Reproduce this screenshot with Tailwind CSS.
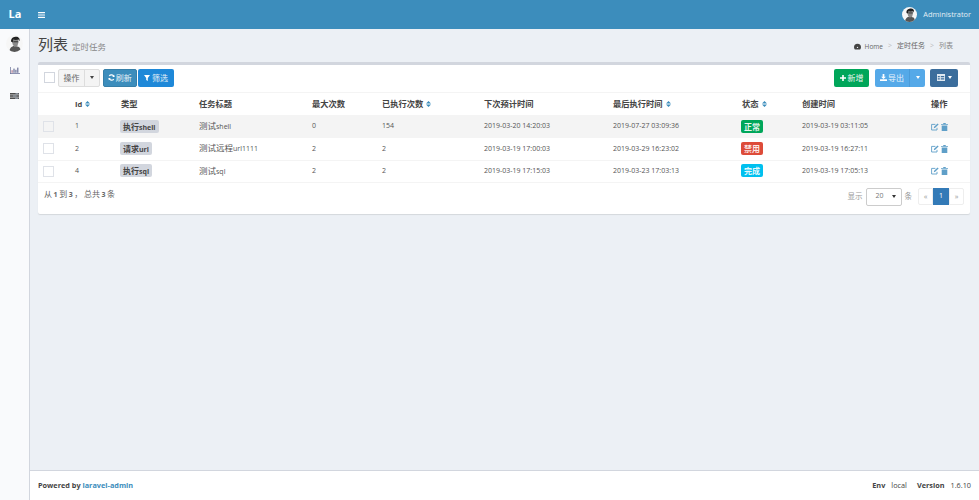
<!DOCTYPE html>
<html lang="zh">
<head>
    <meta charset="UTF-8">
    <title>列表</title>
    <script src="https://cdn.jsdelivr.net/npm/@tailwindcss/browser@4"></script>
</head>
<body class="h-[500px] w-[979px] overflow-hidden bg-[#ecf0f5] font-['Open_Sans','Noto_Sans_CJK_SC',sans-serif] text-[8.5px] text-[#333]">
    <!-- top bar -->
    <header class="flex h-[29px] items-center bg-[#3c8dbc] text-white">
        <div class="w-[30px] text-center text-[11px] font-bold">La</div>
        <svg class="ml-[8px] h-[6px] w-[7px]" viewBox="0 0 7 6" fill="#fff"><rect width="7" height="1.200" rx=".3"/><rect y="2.400" width="7" height="1.200" rx=".3"/><rect y="4.800" width="7" height="1.200" rx=".3"/></svg>
        <div class="ml-auto flex items-center gap-[6px] pr-[8px] text-[7.4px] text-[#e3eef5]">
            <svg class="h-[15px] w-[15px] rounded-full" viewBox="0 0 30 30"><rect width="30" height="30" fill="#f6f6f6"/><path d="M6 30c0-7 4-10 9-11l8 2c2 2 3 5 3 9z" fill="#555"/><path d="M11 13c0-5 3-7 7-7 3 0 5 3 4 7l-2 7-5 1-3-4z" fill="#8a8a8a"/><path d="M9 12C8 5 14 3 18 3c4 0 7 3 6 8l-2-3c-3 1-7 1-9 0l-1 5z" fill="#222"/><rect x="13" y="11" width="8" height="1.800" fill="#333"/></svg>
            <span>Administrator</span>
        </div>
    </header>

    <div class="flex h-[471px]">
        <!-- sidebar -->
        <aside class="flex w-[30px] shrink-0 flex-col items-center border-r border-[#d2d6de] bg-[#f9fafc] pt-[6px]">
            <svg class="h-[17px] w-[17px] rounded-full" viewBox="0 0 30 30"><rect width="30" height="30" fill="#f6f6f6"/><path d="M6 30c0-7 4-10 9-11l8 2c2 2 3 5 3 9z" fill="#555"/><path d="M11 13c0-5 3-7 7-7 3 0 5 3 4 7l-2 7-5 1-3-4z" fill="#8a8a8a"/><path d="M9 12C8 5 14 3 18 3c4 0 7 3 6 8l-2-3c-3 1-7 1-9 0l-1 5z" fill="#222"/><rect x="13" y="11" width="8" height="1.800" fill="#333"/></svg>
            <svg class="mt-[15px] h-[7px] w-[10px]" viewBox="0 0 10 7" fill="#6a6f96"><path d="M0 0h.7v6.300H10V7H0z"/><rect x="1.500" y="3.200" width="1.200" height="2.600" fill="#b07a90"/><rect x="3.400" y="1.600" width="1.200" height="4.200"/><rect x="5.300" y="2.800" width="1.200" height="3"/><rect x="7.200" y=".6" width="1.200" height="5.200"/></svg>
            <svg class="mt-[19px] h-[6px] w-[9px]" viewBox="0 0 9 6" fill="#4d4d4d"><rect width="9" height="1.600"/><rect y="2.200" width="9" height="1.600"/><rect y="4.400" width="9" height="1.600"/><rect x="5.500" y=".4" width="2.800" height=".8" fill="#a9b6c9"/><rect x="3" y="2.600" width="3.600" height=".8" fill="#a9b6c9"/><rect x="5" y="4.800" width="3.200" height=".8" fill="#a9b6c9"/></svg>
        </aside>

        <main class="flex min-w-0 flex-1 flex-col">
            <div class="flex-1 pl-[8px] pr-[9px]">
                <!-- page title -->
                <div class="flex h-[33px] items-center justify-between pb-[2px]">
                    <div class="flex items-baseline gap-[4px]">
                        <h1 class="text-[15px] text-[#444]">列表</h1>
                        <span class="text-[8.5px] text-[#888]">定时任务</span>
                    </div>
                    <div class="mt-[4px] flex items-center gap-[5px] pr-[17px] text-[7px] text-[#666]">
                        <svg class="mr-[-1px] h-[7px] w-[7px]" viewBox="0 0 8 8" fill="#444"><path d="M4 .8a4 4 0 0 0-4 4c0 1 .4 1.900 1 2.600h6c.6-.7 1-1.600 1-2.600a4 4 0 0 0-4-4z"/><circle cx="4" cy="5" r=".8" fill="#ecf0f5"/></svg>
                        <span class="text-[6.5px]">Home</span><span class="text-[#bbb]">&gt;</span><span>定时任务</span><span class="text-[#bbb]">&gt;</span><span class="text-[#888]">列表</span>
                    </div>
                </div>

                <!-- box -->
                <section class="h-[152px] rounded-[2px] border-t-[3px] border-[#d2d6de] bg-white shadow-[0_1px_1px_rgba(0,0,0,0.1)]">
                    <div class="flex h-[28px] items-center border-b border-[#f4f4f4] pb-[2px] pl-[6px] pr-[12px] text-[8px]">
                        <span class="h-[11px] w-[11px] border border-[#d2d6de] bg-white"></span>
                        <div class="ml-[3px] flex h-[18px] rounded-[2px] border border-[#ddd] bg-[#f4f4f4] text-[#666]">
                            <span class="flex w-[26px] items-center justify-center border-r border-[#ddd]">操作</span>
                            <span class="flex w-[14px] items-center justify-center"><i class="border-x-[2.5px] border-t-[3px] border-x-transparent border-t-[#444]"></i></span>
                        </div>
                        <button class="ml-[2.5px] flex h-[18px] w-[34.5px] items-center justify-center gap-[1px] rounded-[2px] border border-[#367fa9] bg-[#3c8dbc] text-[#e6f1f7]">
                            <svg class="h-[7px] w-[7px]" viewBox="0 0 8 8" fill="none" stroke="#fff" stroke-width="1.300"><path d="M7 3.200A3.200 3.200 0 0 0 1.400 2.200M1 4.800a3.200 3.200 0 0 0 5.600 1"/><path d="M7.200 .8v2.600H4.800z" fill="#fff" stroke="none"/><path d="M.8 7.200V4.600h2.400z" fill="#fff" stroke="none"/></svg>刷新
                        </button>
                        <button class="ml-[1px] flex h-[18px] w-[36px] items-center justify-center gap-[2px] rounded-[2px] bg-[#1e88d8] text-[#e6f1f7]">
                            <svg class="h-[6px] w-[6px]" viewBox="0 0 6 6" fill="#fff"><path d="M0 0h6L3.800 3v3L2.200 5V3z"/></svg>筛选
                        </button>
                        <button class="ml-auto flex h-[18px] w-[35px] items-center justify-center gap-[2px] rounded-[2px] bg-[#00a65a] text-[#e6f5ee]">
                            <svg class="h-[6px] w-[6px]" viewBox="0 0 6 6" fill="#fff"><path d="M2.200 0h1.600v2.200H6v1.600H3.800V6H2.200V3.800H0V2.200h2.200z"/></svg>新增
                        </button>
                        <div class="ml-[6px] flex h-[18px] rounded-[2px] bg-[#55a9e8] text-[#eaf4fc]">
                            <span class="flex w-[35px] items-center justify-center gap-[1px] border-r border-[#4a9bd9]">
                                <svg class="h-[7px] w-[7px]" viewBox="0 0 8 8" fill="#fff"><path d="M3 0h2v3h1.800L4 5.800 1.200 3H3z"/><rect y="6" width="8" height="2" rx=".3"/></svg>导出
                            </span>
                            <span class="flex w-[15px] items-center justify-center"><i class="border-x-[2.5px] border-t-[3px] border-x-transparent border-t-white"></i></span>
                        </div>
                        <button class="ml-[5px] flex h-[18px] w-[28px] items-center justify-center gap-[3px] rounded-[2px] bg-[#3b6d9c]">
                            <svg class="h-[7px] w-[8px]" viewBox="0 0 8 7" fill="#dfe8f0"><path d="M0 0h8v7H0zm.8 2v1.300h2V2zm3 0v1.300h3.400V2zm-3 2.200v1.300h2V4.200zm3 0v1.300h3.400V4.200z" fill-rule="evenodd"/></svg>
                            <i class="border-x-[2.5px] border-t-[3px] border-x-transparent border-t-white"></i>
                        </button>
                    </div>

                    <table class="w-full table-fixed text-left">
                        <colgroup>
                            <col class="w-[31px]"><col class="w-[46px]"><col class="w-[78px]"><col class="w-[113px]"><col class="w-[70px]"><col class="w-[102px]"><col class="w-[129px]"><col class="w-[129px]"><col class="w-[60px]"><col class="w-[129px]"><col>
                        </colgroup>
                        <thead class="text-[8.25px] text-[#444]">
                            <tr class="h-[22px]">
                                <th class="font-semibold"></th>
                                <th class="pl-[6px] font-semibold">
                                    <span class="inline-flex items-center gap-[3px] text-[7.5px] font-bold">Id
                                        <svg class="h-[6px] w-[5px]" viewBox="0 0 5 6" fill="#3c8dbc"><path d="M2.500 0L5 2.500H0zM0 3.500h5L2.500 6z"/></svg>
                                    </span>
                                </th>
                                <th class="pl-[6px] font-semibold">类型</th>
                                <th class="pl-[6px] font-semibold">任务标题</th>
                                <th class="pl-[6px] font-semibold">最大次数</th>
                                <th class="pl-[6px] font-semibold">
                                    <span class="inline-flex items-center gap-[3px]">已执行次数
                                        <svg class="h-[6px] w-[5px]" viewBox="0 0 5 6" fill="#3c8dbc"><path d="M2.500 0L5 2.500H0zM0 3.500h5L2.500 6z"/></svg>
                                    </span>
                                </th>
                                <th class="pl-[6px] font-semibold">下次预计时间</th>
                                <th class="pl-[6px] font-semibold">
                                    <span class="inline-flex items-center gap-[3px]">最后执行时间
                                        <svg class="h-[6px] w-[5px]" viewBox="0 0 5 6" fill="#3c8dbc"><path d="M2.500 0L5 2.500H0zM0 3.500h5L2.500 6z"/></svg>
                                    </span>
                                </th>
                                <th class="pl-[6px] font-semibold">
                                    <span class="inline-flex items-center gap-[3px]">状态
                                        <svg class="h-[6px] w-[5px]" viewBox="0 0 5 6" fill="#3c8dbc"><path d="M2.500 0L5 2.500H0zM0 3.500h5L2.500 6z"/></svg>
                                    </span>
                                </th>
                                <th class="pl-[6px] font-semibold">创建时间</th>
                                <th class="pl-[6px] font-semibold">操作</th>
                            </tr>
                        </thead>
                        <tbody class="text-[7px] text-[#555]">
                            <tr class="h-[23px] bg-[#f4f4f4]">
                                <td class="pl-[5px]"><span class="block h-[11px] w-[11px] border border-[#dfe2e8] bg-[#f4f4f4]"></span></td>
                                <td class="pl-[6px]">1</td>
                                <td class="pl-[5px]"><span class="inline-block h-[13px] rounded-[2px] bg-[#d2d6de] px-[3px] text-[7px] leading-[13px] font-bold text-[#444]"><span class="text-[8px]">执行</span>shell</span></td>
                                <td class="pl-[6px]"><span class="text-[8.5px]">测试</span>shell</td>
                                <td class="pl-[6px]">0</td>
                                <td class="pl-[6px]">154</td>
                                <td class="pl-[6px]">2019-03-20 14:20:03</td>
                                <td class="pl-[6px]">2019-07-27 03:09:36</td>
                                <td class="pl-[5px]"><span class="inline-block h-[13px] rounded-[2px] bg-[#00a65a] px-[3px] text-[8px] leading-[13px] font-bold text-[#e6f5ee]">正常</span></td>
                                <td class="pl-[6px]">2019-03-19 03:11:05</td>
                                <td class="pl-[6px]">
                                    <span class="flex items-center gap-[1.5px]">
                                        <svg class="h-[8px] w-[8px]" viewBox="0 0 8 8" fill="none" stroke="#5f9fc8" stroke-width=".9"><path d="M6 4.800V7H.6V1.400H4.400"/><path d="M2.800 5.200l.3-1.500L6.600.4l1 1-3.400 3.400z" fill="#5f9fc8" stroke="none"/></svg>
                                        <svg class="h-[8px] w-[7px]" viewBox="0 0 7 8" fill="#5f9fc8"><path d="M2.500 0h2l.5 1h2v.8H0V1h2zM.7 2.400h5.600V8H.7z"/></svg>
                                    </span>
                                </td>
                            </tr>
                            <tr class="h-[22px] border-b border-[#f4f4f4]">
                                <td class="pl-[5px]"><span class="block h-[11px] w-[11px] border border-[#dfe2e8] bg-white"></span></td>
                                <td class="pl-[6px]">2</td>
                                <td class="pl-[5px]"><span class="inline-block h-[13px] rounded-[2px] bg-[#d2d6de] px-[3px] text-[7px] leading-[13px] font-bold text-[#444]"><span class="text-[8px]">请求</span>url</span></td>
                                <td class="pl-[6px]"><span class="text-[8.5px]">测试远程</span>url1111</td>
                                <td class="pl-[6px]">2</td>
                                <td class="pl-[6px]">2</td>
                                <td class="pl-[6px]">2019-03-19 17:00:03</td>
                                <td class="pl-[6px]">2019-03-29 16:23:02</td>
                                <td class="pl-[5px]"><span class="inline-block h-[13px] rounded-[2px] bg-[#dd4b39] px-[3px] text-[8px] leading-[13px] font-bold text-[#fbe9e7]">禁用</span></td>
                                <td class="pl-[6px]">2019-03-19 16:27:11</td>
                                <td class="pl-[6px]">
                                    <span class="flex items-center gap-[1.5px]">
                                        <svg class="h-[8px] w-[8px]" viewBox="0 0 8 8" fill="none" stroke="#5f9fc8" stroke-width=".9"><path d="M6 4.800V7H.6V1.400H4.400"/><path d="M2.800 5.200l.3-1.500L6.600.4l1 1-3.400 3.400z" fill="#5f9fc8" stroke="none"/></svg>
                                        <svg class="h-[8px] w-[7px]" viewBox="0 0 7 8" fill="#5f9fc8"><path d="M2.500 0h2l.5 1h2v.8H0V1h2zM.7 2.400h5.600V8H.7z"/></svg>
                                    </span>
                                </td>
                            </tr>
                            <tr class="h-[22px] border-b border-[#f4f4f4]">
                                <td class="pl-[5px]"><span class="block h-[11px] w-[11px] border border-[#dfe2e8] bg-white"></span></td>
                                <td class="pl-[6px]">4</td>
                                <td class="pl-[5px]"><span class="inline-block h-[13px] rounded-[2px] bg-[#d2d6de] px-[3px] text-[7px] leading-[13px] font-bold text-[#444]"><span class="text-[8px]">执行</span>sql</span></td>
                                <td class="pl-[6px]"><span class="text-[8.5px]">测试</span>sql</td>
                                <td class="pl-[6px]">2</td>
                                <td class="pl-[6px]">2</td>
                                <td class="pl-[6px]">2019-03-19 17:15:03</td>
                                <td class="pl-[6px]">2019-03-23 17:03:13</td>
                                <td class="pl-[5px]"><span class="inline-block h-[13px] rounded-[2px] bg-[#00c0ef] px-[3px] text-[8px] leading-[13px] font-bold text-[#e5f9fd]">完成</span></td>
                                <td class="pl-[6px]">2019-03-19 17:05:13</td>
                                <td class="pl-[6px]">
                                    <span class="flex items-center gap-[1.5px]">
                                        <svg class="h-[8px] w-[8px]" viewBox="0 0 8 8" fill="none" stroke="#5f9fc8" stroke-width=".9"><path d="M6 4.800V7H.6V1.400H4.400"/><path d="M2.800 5.200l.3-1.500L6.600.4l1 1-3.400 3.400z" fill="#5f9fc8" stroke="none"/></svg>
                                        <svg class="h-[8px] w-[7px]" viewBox="0 0 7 8" fill="#5f9fc8"><path d="M2.500 0h2l.5 1h2v.8H0V1h2zM.7 2.400h5.600V8H.7z"/></svg>
                                    </span>
                                </td>
                            </tr>
                        </tbody>
                    </table>

                    <!-- pagination -->
                    <div class="flex items-start justify-between pl-[6px] pr-[6px] pt-[5px]">
                        <span class="text-[8px] text-[#666] [word-spacing:-0.5px]">从 <b class="text-[7px]">1</b> 到 <b class="text-[7px]">3</b> ， 总共 <b class="text-[7px]">3</b> 条</span>
                        <div class="flex items-center text-[7.5px] text-[#999]">
                            <span>显示</span>
                            <span class="ml-[3px] flex h-[18px] w-[36px] items-center justify-between rounded-[2px] border border-[#ccc] bg-white px-[5px] pl-[9px] text-[7px] text-[#777]">20<i class="border-x-[2px] border-t-[3px] border-x-transparent border-t-[#333]"></i></span>
                            <span class="ml-[3px]">条</span>
                            <div class="ml-[6px] flex h-[17px]">
                                <span class="flex w-[15px] items-center justify-center rounded-l-[2px] border border-[#eee] bg-white">«</span>
                                <span class="flex w-[16px] items-center justify-center bg-[#337ab7] text-[7px] text-white">1</span>
                                <span class="flex w-[15px] items-center justify-center rounded-r-[2px] border border-[#eee] bg-white">»</span>
                            </div>
                        </div>
                    </div>
                </section>
            </div>

            <footer class="flex h-[30px] shrink-0 items-center justify-between border-t border-[#d2d6de] bg-white pl-[8px] pr-[8px] text-[7.3px] text-[#444]">
                <span><b>Powered by</b> <a class="font-bold text-[#3c8dbc]">laravel-admin</a></span>
                <span class="flex gap-[6px]"><b>Env</b><span>local</span><b class="ml-[4px]">Version</b><span>1.6.10</span></span>
            </footer>
        </main>
    </div>
</body>
</html>
